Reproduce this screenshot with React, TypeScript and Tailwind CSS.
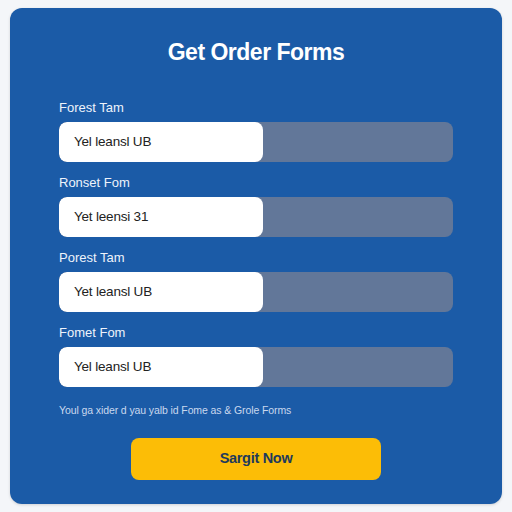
export default function App() {
  const fields = [
    { label: "Forest Tam", value: "Yel leansl UB" },
    { label: "Ronset Fom", value: "Yet leensi 31" },
    { label: "Porest Tam", value: "Yet leansl UB" },
    { label: "Fomet Fom", value: "Yel leansl UB" },
  ];

  return (
    <div className="min-h-screen w-full bg-[#f4f6f9] p-[8px_10px] font-['Liberation_Sans',Arial,sans-serif]">
      <div className="flex h-[496px] flex-col rounded-[12px] bg-[#1b5ba7] px-[49px] pt-[28px] pb-[24px] shadow-[0_1px_3px_rgba(0,0,0,0.15)]">
        <h1 className="text-center text-[23px] leading-[32px] font-bold tracking-[-0.5px] text-white">
          Get Order Forms
        </h1>

        <div className="mt-[32px] flex flex-col gap-[13px]">
          {fields.map((f, i) => (
            <div key={i} className="flex flex-col gap-[6px]">
              <label className="text-[13px] leading-[16px] text-[#eef3fb]">{f.label}</label>
              <div className="flex h-[40px] overflow-hidden rounded-[8px] bg-[#627799]">
                <div className="flex w-[204px] items-center rounded-[8px] bg-white pl-[15px] text-[13.5px] tracking-[-0.2px] text-[#222]">
                  {f.value}
                </div>
              </div>
            </div>
          ))}
        </div>

        <p className="mt-[15px] text-[10.5px] leading-[16px] tracking-[-0.1px] text-[#c9d8ee]">
          Youl ga xider d yau yalb id Fome as &amp; Grole Forms
        </p>

        <button className="mx-auto mt-[20px] h-[43px] w-[250px] rounded-[8px] bg-[#fcbd06] text-[14.5px] font-bold tracking-[-0.3px] text-[#1e3a5c]">
          Sargit Now
        </button>
      </div>
    </div>
  );
}
